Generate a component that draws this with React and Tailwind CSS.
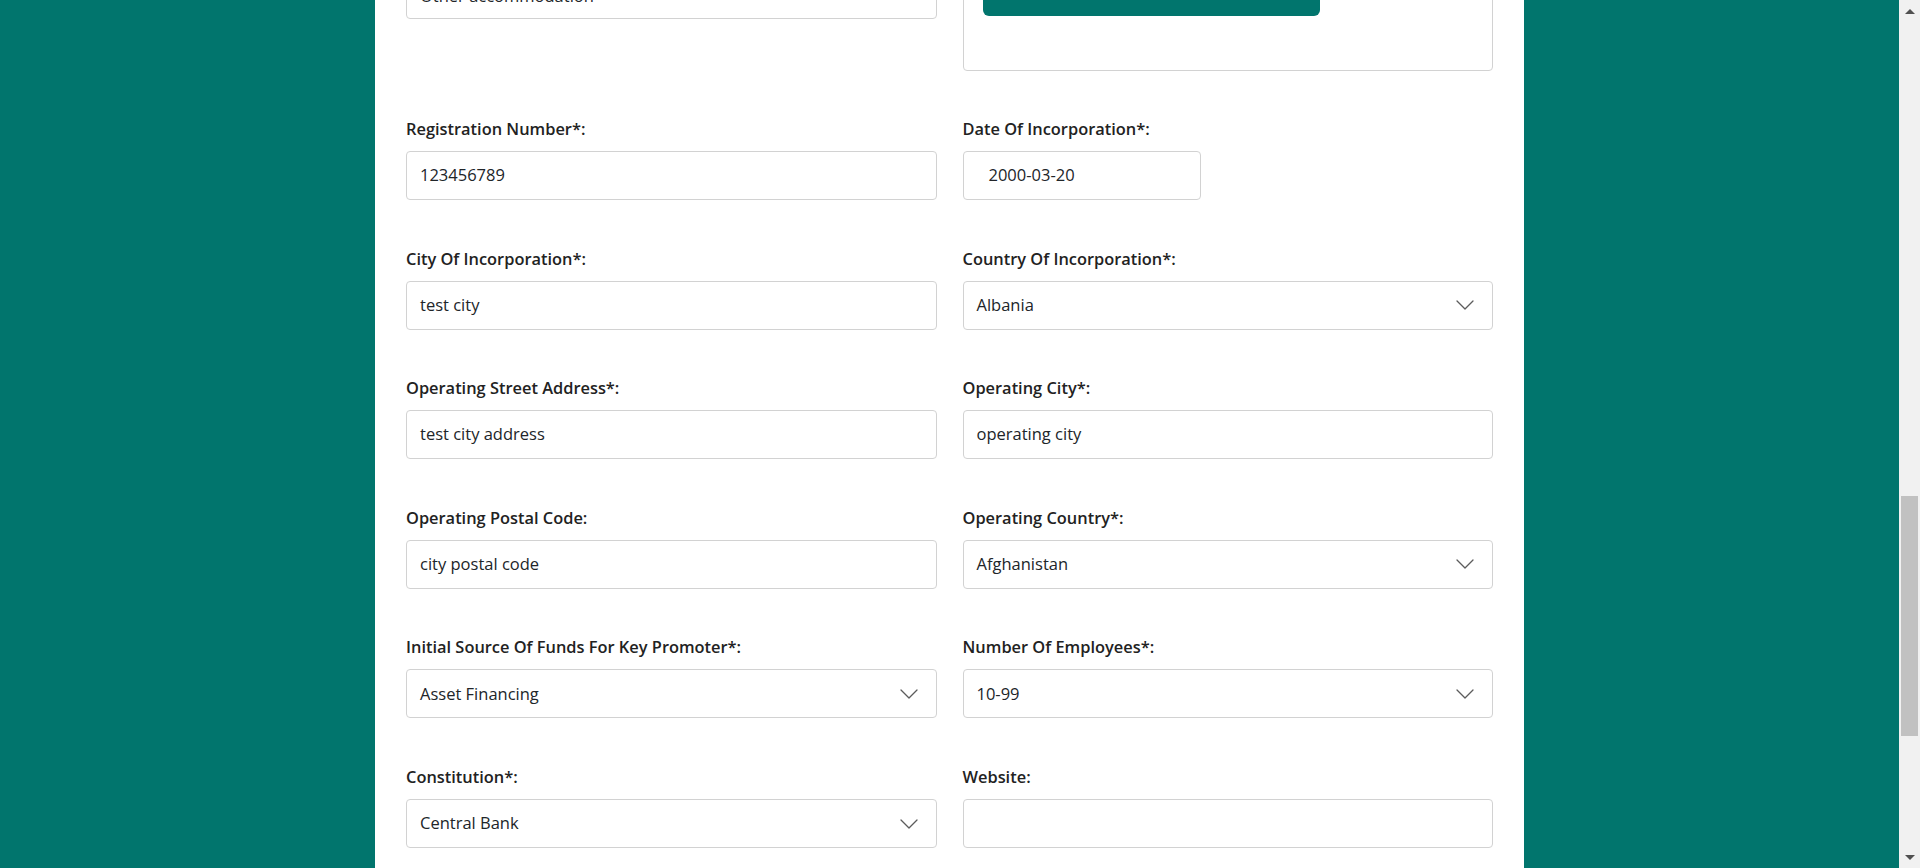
import React from 'react';

const rows = [
  [
    { label: 'Registration Number', required: true, value: '123456789' },
    { label: 'Date Of Incorporation', required: true, value: '2000-03-20', type: 'date' },
  ],
  [
    { label: 'City Of Incorporation', required: true, value: 'test city' },
    { label: 'Country Of Incorporation', required: true, value: 'Albania', type: 'select' },
  ],
  [
    { label: 'Operating Street Address', required: true, value: 'test city address' },
    { label: 'Operating City', required: true, value: 'operating city' },
  ],
  [
    { label: 'Operating Postal Code', value: 'city postal code' },
    { label: 'Operating Country', required: true, value: 'Afghanistan', type: 'select' },
  ],
  [
    { label: 'Initial Source Of Funds For Key Promoter', required: true, value: 'Asset Financing', type: 'select' },
    { label: 'Number Of Employees', required: true, value: '10-99', type: 'select' },
  ],
  [
    { label: 'Constitution', required: true, value: 'Central Bank', type: 'select' },
    { label: 'Website', value: '' },
  ],
];

function Chevron() {
  return (
    <svg width="18" height="10" viewBox="0 0 18 10" fill="none" className="shrink-0">
      <path d="M1 1l8 8 8-8" stroke="#5c5c5c" strokeWidth="1.3" strokeLinecap="round" strokeLinejoin="round" />
    </svg>
  );
}

function Label({ children }) {
  return (
    <label className="text-[16.4px] leading-[24px] font-semibold text-[#222] mb-[10px]">{children}</label>
  );
}

function Field({ label, required, value, type }) {
  return (
    <div className="flex flex-col">
      <Label>
        {label}
        {required ? '*' : ''}:
      </Label>
      {type === 'date' ? (
        <div className="h-[49px] w-[238px] rounded border border-[#d2d2d2] bg-white flex items-center pl-[25px] text-[16.5px] text-[#212529]">
          {value}
        </div>
      ) : type === 'select' ? (
        <div className="h-[49px] rounded border border-[#d2d2d2] bg-white flex items-center justify-between pl-[13px] pr-[18px] text-[16.5px] text-[#212529]">
          <span>{value}</span>
          <Chevron />
        </div>
      ) : (
        <div className="h-[49px] rounded border border-[#d2d2d2] bg-white flex items-center px-[13px] text-[16.5px] text-[#212529]">
          {value}
        </div>
      )}
    </div>
  );
}

function Scrollbar() {
  return (
    <div className="w-[21px] h-full bg-[#f1f1f1] flex flex-col items-center">
      <div className="h-[22px] w-full flex items-center justify-center">
        <div className="w-0 h-0 border-l-[5px] border-r-[5px] border-b-[5px] border-l-transparent border-r-transparent border-b-[#505050]" />
      </div>
      <div className="flex-1 w-full flex flex-col px-[2px]">
        <div className="h-[474px]" />
        <div className="h-[240px] bg-[#c1c1c1]" />
      </div>
      <div className="h-[22px] w-full flex items-center justify-center">
        <div className="w-0 h-0 border-l-[5px] border-r-[5px] border-t-[5px] border-l-transparent border-r-transparent border-t-[#505050]" />
      </div>
    </div>
  );
}

export default function App() {
  return (
    <div className="w-[1920px] h-[868px] flex overflow-hidden font-['Open_Sans',sans-serif]">
      <div className="flex-1 h-full bg-[#01756d] flex justify-center overflow-hidden">
        <div className="w-[1149px] h-full bg-white px-[31px] overflow-hidden">
          <div className="-mt-[64.5px] grid grid-cols-2 gap-x-[26px] gap-y-[46.6px] items-start">
            {/* row scrolled past the top */}
            <div className="flex flex-col">
              <Label>Type Of Accommodation*:</Label>
              <div className="h-[49px] rounded border border-[#d2d2d2] bg-white flex items-center pt-[5px] pl-[13px] pr-[18px] text-[16.5px] text-[#212529]">
                <span>Other accommodation</span>
              </div>
            </div>
            <div className="flex flex-col">
              <Label>Upload Document*:</Label>
              <div className="h-[101px] rounded border border-[#d2d2d2] bg-white px-[19px] pt-[19px]">
                <div className="w-[337px] h-[26px] rounded-md bg-[#01756d]" />
              </div>
            </div>
            {rows.map((pair, i) => (
              <React.Fragment key={i}>
                <Field {...pair[0]} />
                <Field {...pair[1]} />
              </React.Fragment>
            ))}
          </div>
        </div>
      </div>
      <Scrollbar />
    </div>
  );
}
